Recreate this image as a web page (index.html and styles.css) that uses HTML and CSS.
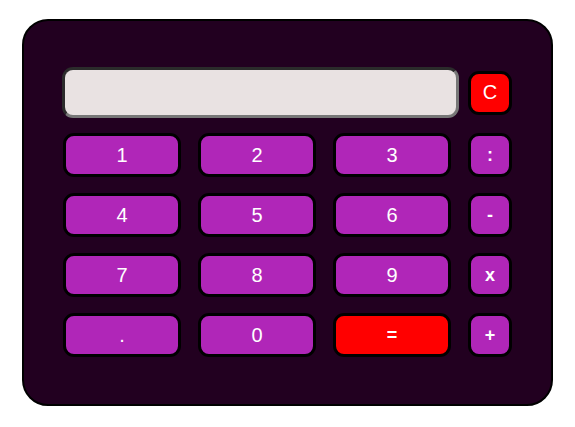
FILE: index.html
```html
<!DOCTYPE html>
<html>
<head>
<meta charset="utf-8">
<link rel="stylesheet" href="styles.css">
</head>
<body>
<div class="calc">
  <div class="top">
    <div class="display"></div>
    <button class="btn small red">C</button>
  </div>
  <div class="keys">
    <button class="btn">1</button>
    <button class="btn">2</button>
    <button class="btn">3</button>
    <button class="btn small op">:</button>
    <button class="btn">4</button>
    <button class="btn">5</button>
    <button class="btn">6</button>
    <button class="btn small op">-</button>
    <button class="btn">7</button>
    <button class="btn">8</button>
    <button class="btn">9</button>
    <button class="btn small op">x</button>
    <button class="btn">.</button>
    <button class="btn">0</button>
    <button class="btn red">=</button>
    <button class="btn small op">+</button>
  </div>
</div>
</body>
</html>
```
FILE: styles.css
```css
html, body {
  margin: 0;
  padding: 0;
  background: #ffffff;
}
body {
  padding: 19px 0 0 22px;
  font-family: "Liberation Sans", Arial, sans-serif;
}
.calc {
  box-sizing: border-box;
  width: 531px;
  height: 387px;
  background: #220020;
  border: 2px solid #000;
  border-radius: 26px;
  padding: 46px 39px 0 38px;
}
.top {
  display: flex;
  align-items: center;
  gap: 9px;
  margin-bottom: 15px;
}
.display {
  box-sizing: border-box;
  width: 397px;
  height: 51px;
  background: #e9e2e2;
  border: 3px solid;
  border-color: #2b2b2b #777 #777 #2b2b2b;
  border-radius: 11px;
}
.keys {
  display: grid;
  grid-template-columns: 118px 118px 118px 44px;
  grid-auto-rows: 44px;
  column-gap: 17px;
  row-gap: 16px;
  margin-left: 1px;
}
.btn {
  box-sizing: border-box;
  height: 44px;
  margin: 0;
  padding: 0;
  background: #b026b8;
  color: #fff;
  border: 3px solid #000;
  border-radius: 11px;
  font-family: "Liberation Sans", Arial, sans-serif;
  font-size: 20px;
  display: flex;
  align-items: center;
  justify-content: center;
}
.small {
  width: 44px;
  font-size: 18px;
}
.op {
  font-weight: bold;
}
.red {
  background: #ff0000;
}
.top .red {
  font-weight: normal;
  font-size: 20px;
}
.keys .red {
  font-weight: bold;
  font-size: 18px;
}
```
